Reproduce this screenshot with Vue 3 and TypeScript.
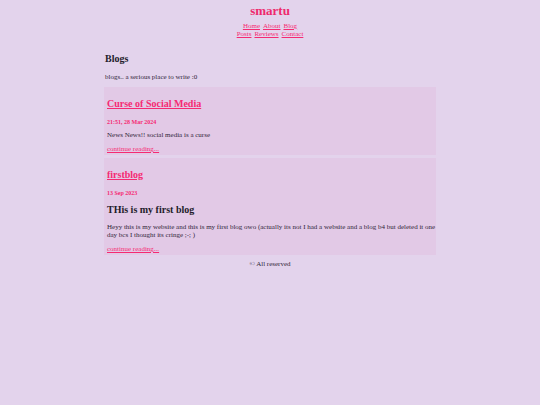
<script setup lang="ts">
interface NavLink {
  label: string
  href: string
}

interface Post {
  title: string
  date: string
  heading?: string
  body: string
  href: string
}

const navRows: NavLink[][] = [
  [
    { label: 'Home', href: '#home' },
    { label: 'About', href: '#about' },
    { label: 'Blog', href: '#blog' },
  ],
  [
    { label: 'Posts', href: '#posts' },
    { label: 'Reviews', href: '#reviews' },
    { label: 'Contact', href: '#contact' },
  ],
]

const posts: Post[] = [
  {
    title: 'Curse of Social Media',
    date: '21:51, 28 Mar 2024',
    body: 'News News!! social media is a curse',
    href: '#curse-of-social-media',
  },
  {
    title: 'firstblog',
    date: '13 Sep 2023',
    heading: 'THis is my first blog',
    body: 'Heyy this is my website and this is my first blog owo (actually its not I had a website and a blog b4 but deleted it one day bcs I thought its cringe ;-; )',
    href: '#firstblog',
  },
]
</script>

<template>
  <div class="page">
    <header class="header">
      <h1 class="logo">smartu</h1>
      <nav class="nav" aria-label="Main">
        <div v-for="(row, i) in navRows" :key="i" class="nav-row">
          <a v-for="link in row" :key="link.label" :href="link.href">{{ link.label }}</a>
        </div>
      </nav>
    </header>

    <main class="content">
      <div class="intro">
        <h2 class="heading">Blogs</h2>
        <p>blogs.. a serious place to write :0</p>
      </div>
      <div class="posts">
        <article v-for="post in posts" :key="post.title" class="post">
          <h2 class="heading"><a :href="post.href">{{ post.title }}</a></h2>
          <p class="date">{{ post.date }}</p>
          <h2 v-if="post.heading" class="heading post-heading">{{ post.heading }}</h2>
          <p>{{ post.body }}</p>
          <a :href="post.href">continue reading...</a>
        </article>
      </div>
    </main>

    <footer class="footer">© All reserved</footer>
  </div>
</template>

<style>
body {
  background: #e3d3ec;
}
</style>

<style scoped>
.page {
  padding: 3px;
  color: #30263a;
  font-family: "Liberation Serif", "Times New Roman", serif;
  font-size: 7px;
  line-height: 8px;
}

h1,
h2,
p {
  margin: 0;
}

a {
  color: #f52a72;
}

.header {
  display: flex;
  flex-direction: column;
  align-items: center;
  gap: 3px;
}

.logo {
  color: #ee2a6c;
  font-size: 13px;
  line-height: 16px;
}

.nav-row {
  display: flex;
  justify-content: center;
  gap: 3px;
}

.content {
  display: flex;
  flex-direction: column;
  gap: 6px;
  max-width: 332px;
  margin: 15px auto 0;
}

.heading {
  color: #231c2b;
  font-size: 10px;
  line-height: 12px;
}

.intro {
  display: flex;
  flex-direction: column;
  gap: 8px;
  padding: 0 1px;
}

.posts {
  display: flex;
  flex-direction: column;
  gap: 3px;
}

.post {
  display: flex;
  flex-direction: column;
  align-items: flex-start;
  gap: 6px;
  padding: 11px 0 2px 3px;
  background: #e2c9e6;
}

.date {
  margin-top: 3px;
  color: #f52a72;
  font-size: 6px;
  font-weight: bold;
  line-height: 6px;
}

.post-heading {
  margin: 2px 0 1px;
}

.footer {
  margin-top: 5px;
  text-align: center;
}
</style>
